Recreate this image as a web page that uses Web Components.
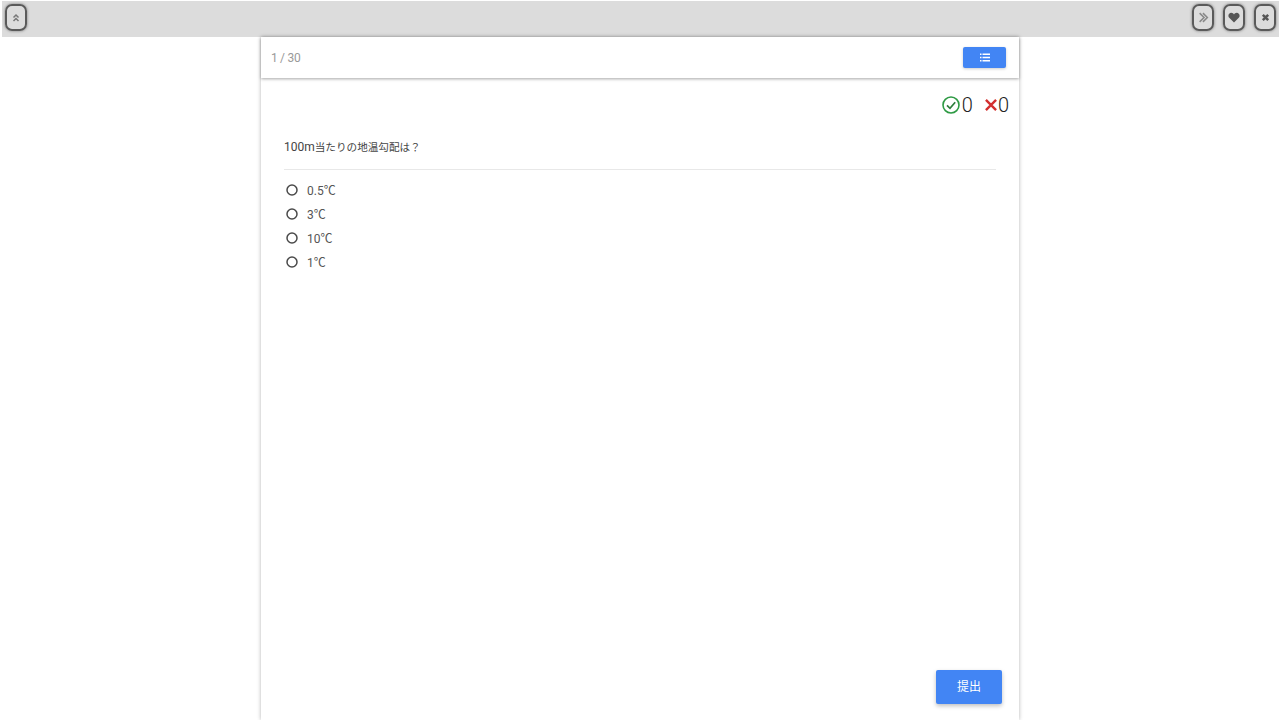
<!DOCTYPE html>
<html lang="ja"><head><meta charset="utf-8">
<style>
html,body{margin:0;padding:0;height:720px;overflow:hidden;background:#fff;font-family:Roboto,"Noto Sans CJK JP",sans-serif}
body{display:flex;flex-direction:column}
</style></head><body>
<top-bar></top-bar>
<quiz-page>
  <quiz-header slot="header"></quiz-header>
  <score-line></score-line>
  <quiz-question>100m<span style="font-size:10.600px">当たりの地温勾配は？</span></quiz-question>
  <quiz-option>0.5℃</quiz-option>
  <quiz-option>3℃</quiz-option>
  <quiz-option>10℃</quiz-option>
  <quiz-option>1℃</quiz-option>
  <submit-row slot="footer">提出</submit-row>
</quiz-page>
<script>
function def(name,html){customElements.define(name,class extends HTMLElement{constructor(){super();this.attachShadow({mode:'open'}).innerHTML=html}})}
def('tool-btn',`<style>:host{display:flex;width:18px;height:23px;border:2px solid #5a5a5a;border-radius:7px;align-items:center;justify-content:center;box-shadow:0 0 3px #777;filter:blur(.5px)}svg{display:block}</style><slot></slot>`);
def('top-bar',`<style>:host{display:flex;flex:none;height:36px;margin:1px 1px 0 2px;box-sizing:border-box;padding:3px 3px 0 3px;background:#dcdcdc;justify-content:space-between;align-items:flex-start}
.g{display:flex;gap:9px}</style>
<div class="g"><tool-btn><svg width="10" height="10" viewBox="0 0 10 10" fill="none" stroke="#777" stroke-width="1.500"><path d="M2.500 4.500 5 2 7.500 4.500M2.500 8 5 5.500 7.500 8"/></svg></tool-btn></div>
<div class="g"><tool-btn><svg width="11" height="11" viewBox="0 0 10 10" fill="none" stroke="#888" stroke-width="1.400"><path d="M1.500 1 5.500 5 1.500 9M4.500 1 8.500 5 4.500 9"/></svg></tool-btn><tool-btn><svg width="12" height="11" viewBox="0 0 12 11" fill="#555"><path d="M6 10.500 1 5.500C-.500 3.500 1 .8 3.200.8 4.500.8 5.500 1.500 6 2.500 6.500 1.500 7.500.8 8.800.8 11 .8 12.500 3.500 11 5.500Z"/></svg></tool-btn><tool-btn><svg width="9" height="9" viewBox="0 0 10 10" fill="none" stroke="#555" stroke-width="2.800"><path d="M2 2 8 8M8 2 2 8"/></svg></tool-btn></div>`);
def('quiz-page',`<style>:host{display:flex;flex-direction:column;flex:1;width:758px;margin:0 0 0 261px;box-shadow:0 0 4px rgba(0,0,0,.3);background:#fff;min-height:0}
.body{flex:1;padding:0 23px;display:flex;flex-direction:column}</style>
<slot name="header"></slot><div class="body"><slot></slot></div><slot name="footer"></slot>`);
def('quiz-header',`<style>:host{display:flex;flex:none;height:41px;box-sizing:border-box;align-items:center;justify-content:space-between;padding:0 13px 0 10px;box-shadow:0 1px 3px rgba(0,0,0,.35);color:#999;font-size:12px;letter-spacing:-.3px;position:relative}
.b{width:43px;height:21px;background:#4285f4;border-radius:2px;display:flex;align-items:center;justify-content:center;box-shadow:0 1px 3px rgba(0,0,0,.2)}</style>
<span>1 / 30</span><div class="b"><svg width="10" height="9" viewBox="0 0 10 9" fill="#fff"><path d="M0 .5h1.500v1.500H0zM2.500.5H10v1.500H2.500zM0 3.800h1.500v1.500H0zM2.500 3.800H10v1.500H2.500zM0 7h1.500v1.500H0zM2.500 7H10v1.500H2.500z"/></svg></div>`);
def('score-line',`<style>:host{display:flex;flex:none;height:49px;margin-right:-13px;justify-content:flex-end;align-items:flex-start;padding-top:15px;box-sizing:border-box;font-size:20px;line-height:24px;color:#222;font-weight:300}
span{display:flex;align-items:center}.x{margin-left:12px}svg{display:block}.z{margin-left:2px;font-weight:300}.y{margin-left:1px;font-weight:300}</style>
<span><svg width="18" height="18" viewBox="0 0 18 18" fill="none"><circle cx="9" cy="9" r="8" stroke="#2e9a44" stroke-width="1.600"/><path d="M5 9.300 8 12.300 13.200 6.300" stroke="#2e7d3c" stroke-width="1.700"/></svg><b class="z">0</b></span>
<span class="x"><svg width="12" height="14" viewBox="0 0 13 14" fill="none" stroke="#d32f2f" stroke-width="2.600"><path d="M1 1.500 12 12.500M12 1.500 1 12.500"/></svg><b class="y">0</b></span>`);
def('quiz-question',`<style>:host{display:block;flex:none;height:43px;padding-top:12px;box-sizing:border-box;border-bottom:1px solid #e8e8e8;font-size:12px;line-height:17px;color:#444;margin-bottom:7px}</style><slot></slot>`);
def('quiz-option',`<style>:host{display:flex;flex:none;height:24px;align-items:center;font-size:12px;color:#555}
svg{display:block;margin:2px 9px 0 2px;flex:none}</style><svg width="12" height="12" viewBox="0 0 12 12" fill="none"><circle cx="6" cy="6" r="5" stroke="#4a4a4a" stroke-width="1.500"/></svg><slot></slot>`);
def('submit-row',`<style>:host{display:flex;flex:none;justify-content:flex-end;padding:0 17px 16px 0}
div{width:66px;height:30px;padding-bottom:4px;background:#4285f4;border-radius:2px;color:#fff;font-size:12px;display:flex;align-items:center;justify-content:center;box-shadow:0 2px 4px rgba(0,0,0,.25)}</style><div><slot></slot></div>`);
</script>
</body></html>
